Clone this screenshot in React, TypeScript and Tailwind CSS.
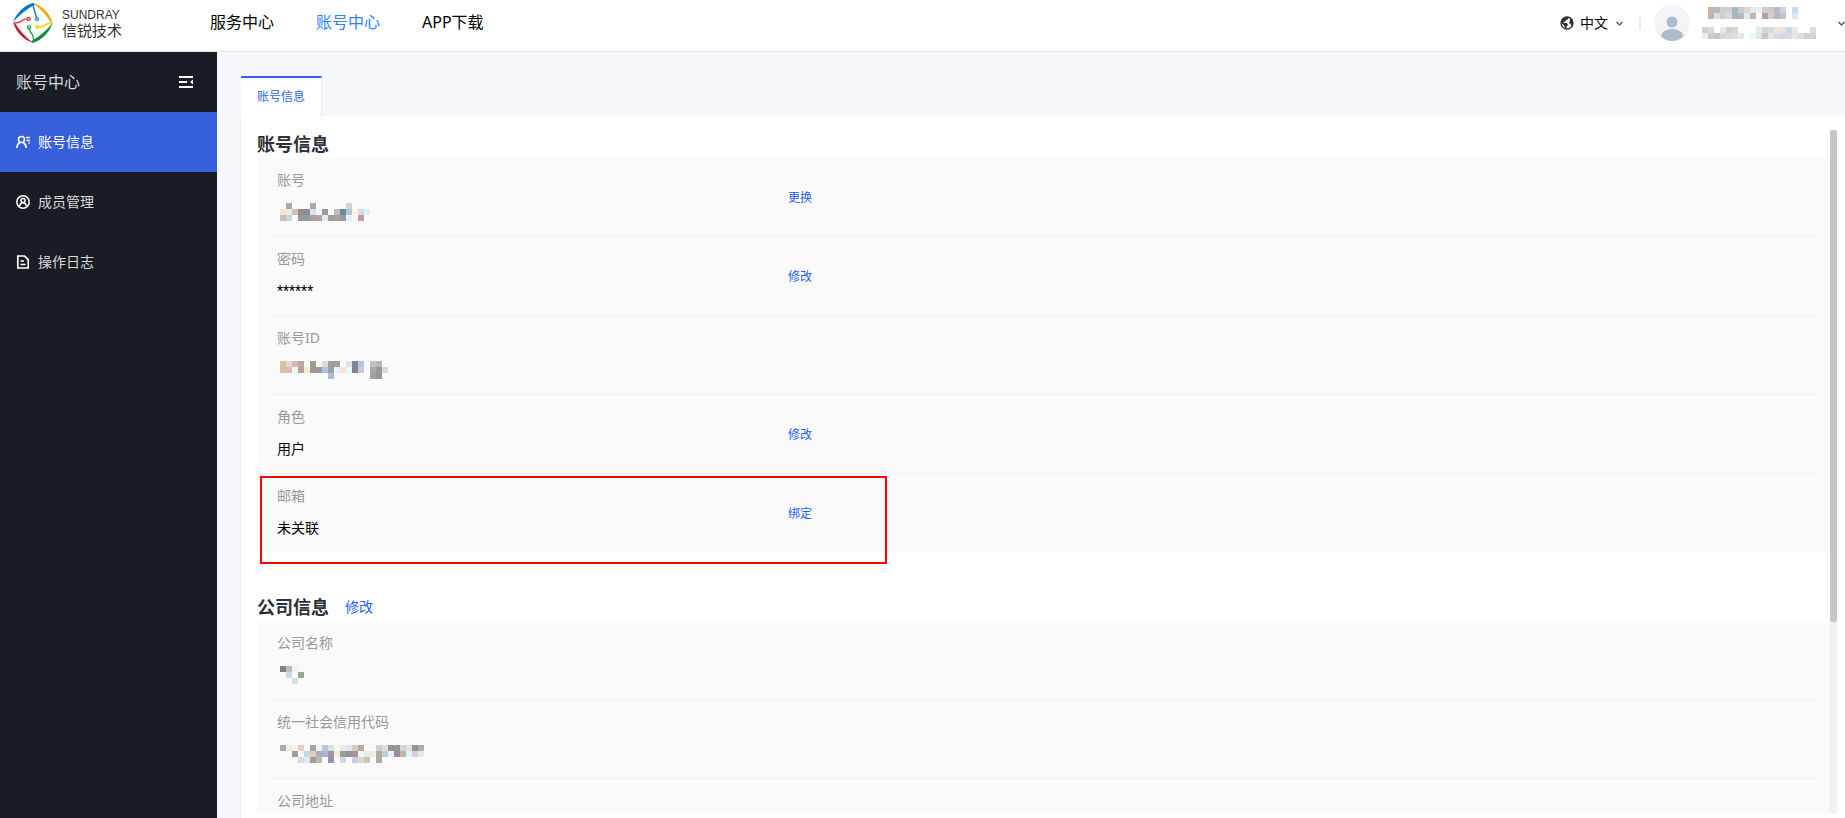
import { ReactNode } from "react";

type Row = {
  label: string;
  value?: string;
  mosaic?: string[];
  action?: string;
  highlight?: boolean;
};

// each string is one line of 6px cells, "-" leaves a cell empty
const maskAccount = [
  "- a8a8a8 - - - a8a8a8 - - - - - d9d3cb",
  "f5e6d2 e6efe6 d0bfc0 998d87 878e99 e4deec e3fbfb 9a9b94 f9fcf5 c2bab6 6c889c b5c4d1 f9f2e8 dcddd2 dcf1fc",
  "d0bac0 cbd3da fbfaf3 9295ab 8f9ca5 a3a3a3 bf9ba6 dfecf3 a0a096 a5a5a5 9999a5 e5f1f7 - bf9ba6"
];
const maskId = [
  "e0bf9b e4d8cc d0bab4 baa9a0 - 9a9f90 - d9e0d3 a0a096 a0a096 f5faf8 e9dfe8 868396 b5c4d8 - bfbfbf b8b8b8",
  "e0bf9b d5bdb4 f0f5f0 bf9ba6 f1ecd5 a0968e 999999 a8c6e8 96a3a3 edf2f5 fae4cf e3fbfb 868096 bfcbe6 - a8a8a8 989898 d9d9d9",
  "- - - - - - - - b3b8d3 - - - - - - a0a0a0 969696"
];
const maskCompany = ["8a7a85 b5bfc2 f9efe6", "- c0ddf2 - 92a892", "- - d9e2d9"];
const maskCode = [
  "adad9f e8ecec faf2e9 e0cfc9 - aaa099 e9f1fa bac4d6 d3e4ef f7f9f2 f0eae5 e4e4ec d3cabf b3aaa3 - f9faf5 d3cdc8 dedcdc 9a8f93 8f9c8f d2d5d9 e6e0dc 9c9199 aeaeae",
  "- fcfcf5 a09a9f - c8d8e4 e6cdb9 acaebd a8b3d8 9c9a9e f3eae0 92a096 99929c a8929c e6f6fb ebebe4 f5ecdd b3aaa3 bfcce0 e0f3f8 9a8f99 bfb3ab dcf0f7 d6d0dc e9e7e5",
  "- - - d5dae8 e5ebea a0a096 c2bab0 - 9797ab - d3daea - c4d2db e0d6d0 cfc0b8 - b3aaa3"
];
const maskUser = [
  "- c4b3a8 bababa cfcfcf dccfc8 a9b6c0 c8ccd0 dfd5cd e4e8ee e6f0f5 d9c9bf c3ccd3 b3bcc4 c5d5e5 - c9dbf2",
  "- c9b3a8 dcdcdc d3cfcd d5dbe3 a9b6c0 b8bcc0 dcebf2 c5b5ae ffffff a8a4a4 ddc9bd b9b9b9 c0c6cc - dbe6f5"
];
const maskOrg = [
  "cfcfd3 dadae0 - e9e9ed cfcfcf d5d5d5 - - - e3eef2 d5d5d5 dadada f0e6e0 e3e3e8 c9d8e8 e8e8ee - - dadfd6",
  "ececf3 d3c5cb c8c4cc dcd6dc e2dcd9 dcdfe8 e3e6ea - e3fbfb dae8ee cfc3c3 e0e3e8 dfd9df dad3dc dcd9e3 ece2dc dcdce2 d5cfd5 cfd6d2"
];

const accountRows: Row[] = [
  { label: "账号", mosaic: maskAccount, action: "更换" },
  { label: "密码", value: "******", action: "修改" },
  { label: "账号ID", mosaic: maskId },
  { label: "角色", value: "用户", action: "修改" },
  { label: "邮箱", value: "未关联", action: "绑定", highlight: true }
];

const companyRows: Row[] = [
  { label: "公司名称", mosaic: maskCompany },
  { label: "统一社会信用代码", mosaic: maskCode },
  { label: "公司地址", value: "" }
];

function Mosaic({ lines }: { lines: string[] }) {
  const cells = lines.map((l) => l.split(" "));
  const w = Math.max(...cells.map((c) => c.length)) * 6;
  const h = lines.length * 6;
  return (
    <svg width={w} height={h} viewBox={`0 0 ${w} ${h}`} shapeRendering="crispEdges" aria-hidden="true">
      {cells.map((row, y) =>
        row.map((c, x) =>
          c === "-" ? null : <rect key={`${x}-${y}`} x={x * 6} y={y * 6} width="6" height="6" fill={`#${c}`} />
        )
      )}
    </svg>
  );
}

function Logo() {
  return (
    <svg width="42" height="42" viewBox="36 9 126 126" fill="none" aria-hidden="true">
      <path d="M39 70Q55 26 99 11L106 16Q66 38 39 70Z" fill="#0a74c4" />
      <path d="M97 11Q142 24 158 72L151 68Q132 36 97 11Z" fill="#f4a300" />
      <path d="M159 70Q142 118 99 132L93 127Q134 104 159 70Z" fill="#0b8f3c" />
      <path d="M39 70L47 75Q66 106 100 132Q55 118 39 70Z" fill="#c8202f" />
      <path d="M98 14Q103 36 109 54" stroke="#0a74c4" strokeWidth="4" />
      <path d="M42 72Q60 72 68 64Q72 60 81 60" stroke="#e0393e" strokeWidth="4" />
      <path d="M155 72Q138 74 132 80Q128 84 117 84" stroke="#f2d400" strokeWidth="4" />
      <path d="M101 128Q100 108 94 102Q90 98 88 90" stroke="#1ea04c" strokeWidth="4" />
      <circle cx="86" cy="60" r="4.500" stroke="#e0393e" strokeWidth="4" />
      <circle cx="111" cy="60" r="4.500" stroke="#2a8fd8" strokeWidth="4" />
      <circle cx="87" cy="85" r="4.500" stroke="#1ea04c" strokeWidth="4" />
      <circle cx="112" cy="84" r="4.500" stroke="#f2d400" strokeWidth="4" />
    </svg>
  );
}

function Globe() {
  return (
    <svg width="14" height="14" viewBox="0 0 14 14" aria-hidden="true">
      <circle cx="7" cy="7" r="6" fill="#fff" stroke="#333" strokeWidth="1.3" />
      <path d="M1 5Q2 2 6 1L8.500 1.500L8 3.500L6 4L5.500 5.500L3.500 6L4 7H7L8 9L6.500 10.500V13Q4.500 12.500 4.500 10L1 6.500Z" fill="#333" />
      <path d="M10 2.500L12 3.500Q13.500 6 13 8.500L11.500 10L10.500 8L9 7L9.800 5Z" fill="#333" />
    </svg>
  );
}

function Chevron() {
  return (
    <svg width="7" height="5" viewBox="0 0 7 5" fill="none" stroke="#444" strokeWidth="1.1" aria-hidden="true">
      <path d="M.5 1L3.500 4L6.500 1" />
    </svg>
  );
}

function Avatar() {
  return (
    <svg width="36" height="36" viewBox="0 0 36 36" aria-hidden="true">
      <circle cx="18" cy="18" r="18" fill="#f2f4f7" />
      <circle cx="18" cy="17" r="5.500" fill="#aebacd" />
      <path d="M7 31.500Q8 24 18 24Q28 24 29.500 31.500Q24 36 18 36Q12 36 7 31.500Z" fill="#aebacd" />
    </svg>
  );
}

function IconAccount() {
  return (
    <svg width="14" height="14" viewBox="0 0 14 14" fill="none" stroke="currentColor" strokeWidth="1.500" aria-hidden="true">
      <circle cx="5.500" cy="4.500" r="3" />
      <path d="M.8 13Q1 9 4 7.500M7 7.500Q10 9 10.300 13M10 2.500h4M10.500 5.500h3.500" />
      <path d="M12 8h2" strokeWidth="1.200" />
    </svg>
  );
}

function IconMember() {
  return (
    <svg width="14" height="14" viewBox="0 0 14 14" fill="none" stroke="currentColor" strokeWidth="1.500" aria-hidden="true">
      <circle cx="7" cy="7" r="6.200" />
      <circle cx="7" cy="5.500" r="2" />
      <path d="M3.800 11Q4 7.800 7 7.800Q10 7.800 10.200 11" />
    </svg>
  );
}

function IconLog() {
  return (
    <svg width="14" height="14" viewBox="0 0 14 14" fill="none" stroke="currentColor" strokeWidth="1.700" aria-hidden="true">
      <path d="M1.800 1H8.500L12.200 4.700V13H1.800Z" />
      <path d="M4.500 6H8M4.500 9.500H9.500" strokeWidth="1.500" />
    </svg>
  );
}

function IconCollapse() {
  return (
    <svg width="14" height="12" viewBox="0 0 14 12" fill="#fff" aria-hidden="true">
      <path d="M0 0h14v2H0zM0 5h8v2H0zM0 10h14v2H0zM14 3.500v5L11 6z" />
    </svg>
  );
}

const menu: { label: string; icon: ReactNode }[] = [
  { label: "账号信息", icon: <IconAccount /> },
  { label: "成员管理", icon: <IconMember /> },
  { label: "操作日志", icon: <IconLog /> }
];

function InfoList({ rows }: { rows: Row[] }) {
  return (
    <dl className="bg-[#fafafa] px-[10px]">
      {rows.map((r) => (
        <div key={r.label} className="relative flex h-[79px] border-b border-[#f0f0f0] px-[10px] last:h-[78px] last:border-b-0">
          <div className="flex w-1/3 flex-col gap-2 pt-[10px] text-sm leading-6">
            <dt className="text-[#999]">{r.label}</dt>
            <dd className="flex h-6 items-center font-['Roboto','Noto_Sans_CJK_SC',sans-serif] text-black">
              {r.mosaic ? (
                <span className="pl-[3px]">
                  <Mosaic lines={r.mosaic} />
                </span>
              ) : (
                r.value
              )}
            </dd>
          </div>
          {r.action && (
            <dd className="flex items-center pt-[2px] text-xs text-[#1f5eff]">
              <button>{r.action}</button>
            </dd>
          )}
          {r.highlight && (
            <span className="pointer-events-none absolute -left-[7px] top-[2px] h-[88px] w-[627px] border-2 border-[#f00]" />
          )}
        </div>
      ))}
    </dl>
  );
}

export default function App() {
  return (
    <div className="flex h-screen flex-col overflow-hidden bg-[#f7f8fd] font-['Noto_Sans','Noto_Sans_CJK_SC',sans-serif]">
      <header className="flex h-[52px] shrink-0 items-center border-b border-[#e0e2ea] bg-white pb-[5px] pl-3">
        <a href="#" className="flex w-[198px] items-center gap-2">
          <Logo />
          <span className="flex flex-col text-[#333]">
            <span className="font-['Liberation_Sans',sans-serif] text-xs leading-[14px]">SUNDRAY</span>
            <span className="text-[15px] leading-4">信锐技术</span>
          </span>
        </a>
        <nav className="flex gap-[42px] pb-[2px] text-base leading-6 text-black">
          <a href="#">服务中心</a>
          <a href="#" className="text-[#2a82ff]">账号中心</a>
          <a href="#">APP下载</a>
        </nav>
        <div className="ml-auto flex items-center">
          <button className="flex items-center text-sm text-black">
            <Globe />
            <span className="ml-[6px] mr-2">中文</span>
            <Chevron />
          </button>
          <span className="ml-4 h-[13px] w-[2px] bg-[#e3e9f5]" />
          <button className="ml-[13px] flex items-center">
            <Avatar />
            <span className="ml-3 mr-[18px] flex w-[118px] flex-col gap-2">
              <Mosaic lines={maskUser} />
              <Mosaic lines={maskOrg} />
            </span>
            <Chevron />
          </button>
        </div>
      </header>

      <div className="flex min-h-0 flex-1">
        <aside className="w-[217px] shrink-0 bg-[#191c25] text-[#d8d9db]">
          <div className="flex h-[60px] items-center justify-between pl-4 pr-6">
            <span className="text-base">账号中心</span>
            <button aria-label="收起菜单">
              <IconCollapse />
            </button>
          </div>
          <nav>
            {menu.map((m, i) => (
              <a
                key={m.label}
                href="#"
                className={
                  "flex h-[60px] items-center gap-2 px-4 text-sm " + (i === 0 ? "bg-[#375fdc] text-white" : "")
                }
              >
                <span className="text-white">{m.icon}</span>
                {m.label}
              </a>
            ))}
          </nav>
        </aside>

        <main className="flex min-w-0 flex-1 flex-col pl-6 pt-6">
          <div className="flex">
            <button className="h-10 border-r border-t-2 border-r-[#e8ebf3] border-t-[#2d66ee] bg-white px-4 text-xs text-[#2d66ee]">
              账号信息
            </button>
          </div>
          <div className="flex min-h-0 flex-1 bg-white pb-[5px] pl-4 pr-2 pt-[14px] shadow-[-1px_0_0_#eceef4]">
            <div className="min-w-0 flex-1 overflow-hidden">
              <h2 className="h-7 text-lg font-bold leading-7 text-[#2b303b]">账号信息</h2>
              <InfoList rows={accountRows} />
              <div className="mt-[41px] flex h-7 items-center gap-4">
                <h2 className="text-lg font-bold leading-7 text-[#2b303b]">公司信息</h2>
                <button className="text-sm text-[#1f5eff]">修改</button>
              </div>
              <InfoList rows={companyRows} />
            </div>
            <div className="w-[7px] shrink-0 bg-[#f1f1f1]">
              <div className="h-[72%] rounded-xs bg-[#c4c6c9]" />
            </div>
          </div>
        </main>
      </div>
    </div>
  );
}
